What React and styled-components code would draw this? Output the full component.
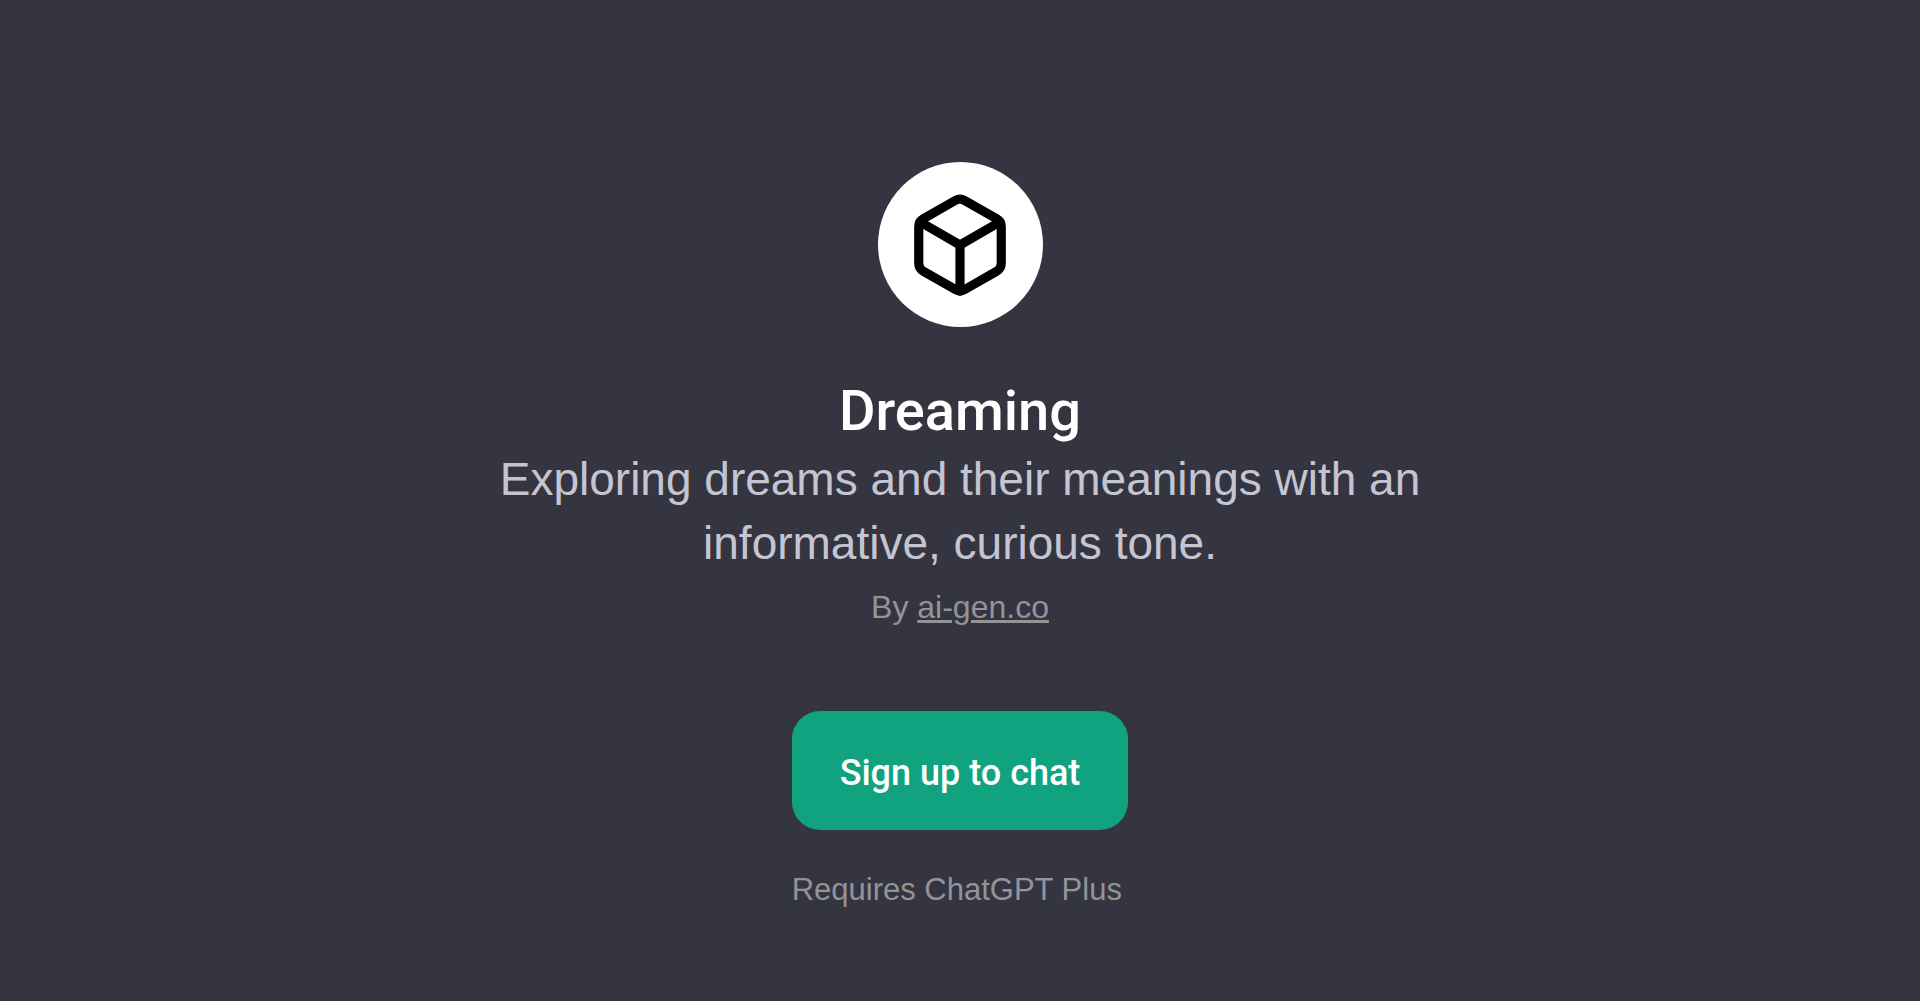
import React from "react";
import styled, { createGlobalStyle } from "styled-components";

const GlobalStyle = createGlobalStyle`
  body {
    margin: 0;
    background-color: #353541;
    font-family: "Liberation Sans", Arial, sans-serif;
  }
`;

const Page = styled.main`
  box-sizing: border-box;
  min-height: 100vh;
  padding: 162px 24px 80px;
  display: flex;
  flex-direction: column;
  align-items: center;
`;

const Avatar = styled.div`
  display: flex;
  align-items: center;
  justify-content: center;
  width: 165px;
  height: 165px;
  border-radius: 50%;
  background-color: #fff;
  color: #000;
`;

const Intro = styled.section`
  display: flex;
  flex-direction: column;
  align-items: center;
  max-width: 960px;
  margin-top: 52px;
  text-align: center;
`;

const Title = styled.h1`
  margin: 0;
  font-family: Roboto, sans-serif;
  font-size: 56px;
  line-height: 64px;
  font-weight: 500;
  color: #fff;
`;

const Description = styled.p`
  margin: 4px 0 0;
  font-size: 46px;
  line-height: 64px;
  color: #c5c5d2;
`;

const Author = styled.p`
  margin: 12px 0 0;
  font-size: 32px;
  line-height: 40px;
  color: #949497;
`;

const AuthorLink = styled.a`
  color: inherit;
  text-decoration: underline;
`;

const Actions = styled.div`
  display: flex;
  flex-direction: column;
  align-items: flex-start;
  gap: 40px;
  margin-top: 84px;
`;

const SignUpButton = styled.button`
  padding: 38px 48px 33px;
  border: none;
  border-radius: 28px;
  background-color: #11a37f;
  color: #fff;
  font-family: Roboto, sans-serif;
  font-size: 36px;
  line-height: 48px;
  font-weight: 500;
  cursor: pointer;
`;

const Requirement = styled.p`
  margin: 0;
  font-size: 31px;
  line-height: 40px;
  color: #949497;
`;

const BoxIcon = () => (
  <svg
    width="110"
    height="110"
    viewBox="0 0 24 24"
    fill="none"
    stroke="currentColor"
    strokeWidth="2"
    strokeLinecap="round"
    strokeLinejoin="round"
    aria-hidden="true"
  >
    <path d="M21 16V8a2 2 0 0 0-1-1.73l-7-4a2 2 0 0 0-2 0l-7 4A2 2 0 0 0 3 8v8a2 2 0 0 0 1 1.73l7 4a2 2 0 0 0 2 0l7-4A2 2 0 0 0 21 16z" />
    <polyline points="3.27 6.96 12 12.01 20.73 6.96" />
    <line x1="12" y1="22.08" x2="12" y2="12" />
  </svg>
);

const App = () => {
  return (
    <>
      <GlobalStyle />
      <Page>
        <Avatar>
          <BoxIcon />
        </Avatar>
        <Intro>
          <Title>Dreaming</Title>
          <Description>
            Exploring dreams and their meanings with an informative, curious
            tone.
          </Description>
          <Author>
            By <AuthorLink href="https://ai-gen.co">ai-gen.co</AuthorLink>
          </Author>
        </Intro>
        <Actions>
          <SignUpButton type="button">Sign up to chat</SignUpButton>
          <Requirement>Requires ChatGPT Plus</Requirement>
        </Actions>
      </Page>
    </>
  );
};

export default App;
